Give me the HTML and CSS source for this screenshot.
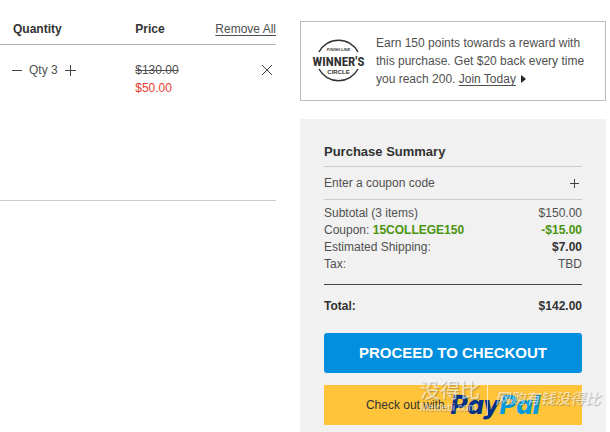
FILE: index.html
```html
<!DOCTYPE html>
<html lang="en">
<head>
<meta charset="utf-8">
<meta name="viewport" content="width=device-width, initial-scale=1">
<title>Shopping Cart</title>
<link rel="stylesheet" href="styles.css">
</head>
<body>
<main class="cart">
  <table class="items">
    <thead>
      <tr>
        <th class="col-qty" scope="col">Quantity</th>
        <th class="col-price" scope="col">Price</th>
        <th class="col-remove" scope="col"><a class="link" href="#">Remove All</a></th>
      </tr>
    </thead>
    <tbody>
      <tr>
        <td class="col-qty">
          <div class="stepper">
            <button class="icon-button" type="button" aria-label="Decrease quantity"><svg width="12" height="12" viewBox="0 0 12 12"><path d="M1 6.5h10"/></svg></button>
            <span>Qty 3</span>
            <button class="icon-button" type="button" aria-label="Increase quantity"><svg width="12" height="12" viewBox="0 0 12 12"><path d="M1 6.5h11M6.5 1v11"/></svg></button>
          </div>
        </td>
        <td class="col-price"><s>$130.00</s><br><span class="sale">$50.00</span></td>
        <td class="col-remove"><button class="icon-button remove" type="button" aria-label="Remove item"><svg width="12" height="12" viewBox="0 0 12 12"><path d="M1 1l10 10M11 1L1 11"/></svg></button></td>
      </tr>
    </tbody>
  </table>

  <aside class="side">
    <section class="rewards">
      <svg class="badge" width="51" height="46" viewBox="0 0 51 46" role="img" aria-label="Finish Line Winner's Circle">
        <path d="M6 14a22 22 0 0 1 39 0M6 31a22 22 0 0 0 39 0" fill="none" stroke="#333" stroke-width="1.500"/>
        <text class="badge-small" x="25.500" y="13" text-anchor="middle">FINISH LINE</text>
        <text class="badge-name" x="25.500" y="28" text-anchor="middle">WINNER'S</text>
        <text class="badge-circle" x="25.500" y="36" text-anchor="middle">CIRCLE</text>
      </svg>
      <p class="rewards-text">Earn 150 points towards a reward with this purchase. Get $20 back every time you reach 200. <a class="link" href="#">Join Today</a> <svg class="caret" width="5" height="8" viewBox="0 0 5 8"><path d="M0 0l5 4-5 4z"/></svg></p>
    </section>

    <section class="summary">
      <h2 class="title">Purchase Summary</h2>
      <button class="coupon" type="button"><span>Enter a coupon code</span><svg width="10" height="10" viewBox="0 0 10 10"><path d="M1 5.500h9M5.500 1v9"/></svg></button>
      <dl class="lines">
        <div class="line"><dt>Subtotal (3 items)</dt><dd>$150.00</dd></div>
        <div class="line"><dt>Coupon: <b class="green">15COLLEGE150</b></dt><dd class="green strong">-$15.00</dd></div>
        <div class="line"><dt>Estimated Shipping:</dt><dd class="strong">$7.00</dd></div>
        <div class="line"><dt>Tax:</dt><dd>TBD</dd></div>
      </dl>
      <div class="total"><span>Total:</span><span>$142.00</span></div>
      <button class="checkout" type="button">PROCEED TO CHECKOUT</button>
      <div class="paypal-wrap">
        <button class="paypal" type="button"><span>Check out with</span><span class="paypal-logo">Pay<span class="pal">Pal</span></span></button>
        <div class="watermark" lang="zh-CN">
          <div class="mark-brand"><span class="mark-name">没得比</span><span class="mark-site">Meidebi.com</span></div>
          <span class="mark-slogan">网购有钱没得比</span>
        </div>
      </div>
    </section>
  </aside>
</main>
</body>
</html>
```

FILE: styles.css
```css
* {
  box-sizing: border-box;
}

body {
  margin: 0;
  background: #fff;
  color: #505050;
  font: 12px/18px "Liberation Sans", Arial, sans-serif;
}

button {
  padding: 0;
  border: 0;
  background: none;
  color: inherit;
  font: inherit;
  cursor: pointer;
}

.link {
  color: inherit;
  text-decoration: underline;
  text-underline-offset: 2px;
}

.cart {
  display: grid;
  grid-template-columns: 276fr 306fr;
  gap: 24px;
  align-items: start;
  padding: 20px 4px 0 0;
}

.items {
  width: 100%;
  border-collapse: collapse;
  table-layout: fixed;
}

.items th {
  padding: 0 0 6px;
  border-bottom: 1px solid #b4b4b4;
  color: #333;
  text-align: left;
  vertical-align: top;
}

.items td {
  height: 156px;
  padding: 16px 0 0;
  border-bottom: 1px solid #ccc;
  vertical-align: top;
}

.items .col-qty {
  width: 49%;
  padding-left: 13px;
}

.items .col-price {
  width: 24%;
}

.items .col-remove {
  color: #505050;
  font-weight: normal;
  text-align: right;
}

.stepper {
  display: flex;
  align-items: center;
  gap: 6px;
  margin-left: -2px;
}

.icon-button svg,
.coupon svg {
  display: block;
  fill: none;
  stroke: #444;
}

.remove {
  margin: 3px 3px 0 0;
}

.sale {
  color: #e8392b;
}

.rewards {
  display: flex;
  align-items: center;
  gap: 12px;
  margin-top: 1px;
  padding: 12px;
  border: 1px solid #bbb;
}

.badge {
  flex: none;
  overflow: visible;
  fill: #333;
  font-family: "Liberation Sans", Arial, sans-serif;
  font-weight: bold;
}

.badge-small {
  font-size: 4px;
  font-style: italic;
}

.badge-name {
  font-family: "Liberation Sans Narrow", "Roboto Condensed", "Open Sans Condensed", "Liberation Sans", sans-serif;
  font-size: 13px;
}

.badge-circle {
  font-size: 6px;
}

.rewards-text {
  margin: 0;
}

.caret {
  margin-left: 2px;
  fill: #222;
}

.summary {
  margin-top: 18px;
  padding: 24px 24px 8px;
  background: #f1f1f1;
}

.title {
  margin: 0;
  padding-bottom: 5px;
  border-bottom: 1px solid #ccc;
  color: #333;
  font-size: 13px;
  line-height: 18px;
}

.coupon {
  display: flex;
  align-items: center;
  justify-content: space-between;
  width: 100%;
  height: 33px;
  padding-right: 3px;
  border-bottom: 1px solid #ccc;
}

.lines {
  margin: 0;
  padding: 5px 0 11px;
  border-bottom: 1px solid #444;
}

.line {
  display: flex;
  justify-content: space-between;
  line-height: 17px;
}

.line dd {
  margin: 0;
}

.line .strong {
  font-weight: bold;
  color: #333;
}

.line .green {
  color: #4a9410;
}

.total {
  display: flex;
  justify-content: space-between;
  padding: 12px 0 18px;
  color: #333;
  font-weight: bold;
}

.checkout {
  display: block;
  width: 100%;
  height: 40px;
  border-radius: 3px;
  background: #018fde;
  color: #fff;
  font-size: 15px;
  font-weight: bold;
}

.paypal-wrap {
  position: relative;
  margin-top: 12px;
}

.paypal {
  display: flex;
  align-items: center;
  justify-content: center;
  gap: 6px;
  width: 100%;
  height: 40px;
  background: #ffc439;
  color: #333;
}

.paypal-logo {
  color: #003087;
  font: italic 800 26px/32px Inter, "Open Sans", sans-serif;
}

.pal {
  color: #009cde;
}

.watermark {
  position: absolute;
  top: -4px;
  right: -18px;
  display: flex;
  align-items: flex-start;
  gap: 7px;
  color: rgba(255, 255, 255, 0.65);
  font-family: "Liberation Sans", "Noto Sans CJK SC", sans-serif;
  text-shadow: 1px 1px 1px rgba(80, 80, 80, 0.4);
  white-space: nowrap;
  pointer-events: none;
}

.mark-brand {
  display: flex;
  flex-direction: column;
  padding-right: 7px;
  border-right: 1px solid rgba(255, 255, 255, 0.65);
}

.mark-name {
  font-size: 20px;
  line-height: 20px;
}

.mark-site {
  font-size: 10px;
  line-height: 14px;
}

.mark-slogan {
  font-size: 15px;
  font-style: italic;
  line-height: 36px;
}
```
